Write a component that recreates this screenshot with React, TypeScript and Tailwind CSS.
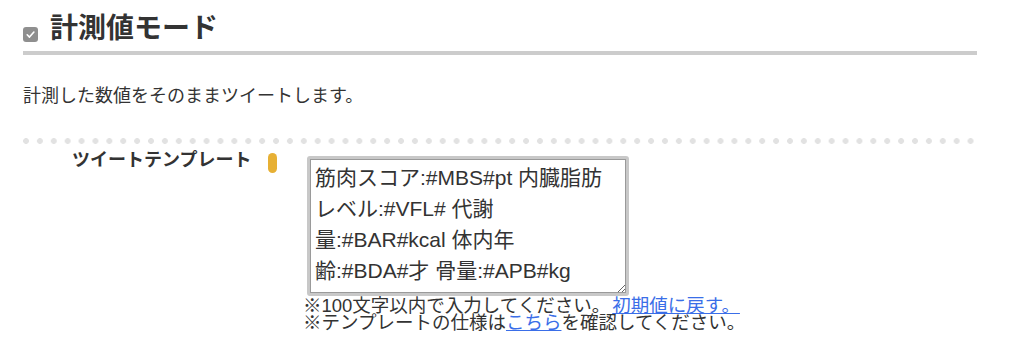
import React, { useEffect, useRef } from "react";

const TEMPLATE = [
  "体重:#WGT#kg 筋肉:#MSW#kg",
  "筋肉スコア:#MBS#pt 内臓脂肪",
  "レベル:#VFL# 代謝",
  "量:#BAR#kcal 体内年",
  "齢:#BDA#才 骨量:#APB#kg",
].join("\n");

function CheckBox() {
  return (
    <div className="mb-[1px] flex h-[15px] w-[15px] items-center justify-center rounded-[3px] bg-[#8f8f8f]">
      <svg width="11" height="11" viewBox="0 0 11 11" fill="none">
        <path d="M2.2 5.8 L4.5 8.1 L8.9 3" stroke="#fff" strokeWidth="1.6" strokeLinecap="round" strokeLinejoin="round" />
      </svg>
    </div>
  );
}

function TemplateBox() {
  const ref = useRef<HTMLTextAreaElement>(null);

  // 参照画像はスクロール済みの状態
  useEffect(() => {
    if (ref.current) ref.current.scrollTop = 32;
  }, []);

  return (
    <textarea
      ref={ref}
      defaultValue={TEMPLATE}
      wrap="off"
      className="ml-[4px] block h-[140px] w-[322px] overflow-hidden whitespace-pre rounded-[3px] border-[3px] border-[#c8c8c8] pl-[5px] pr-[5px] pt-[4px] pb-[8px] text-[21px] leading-[31px] text-[#333] outline-none [box-shadow:inset_0_0_0_1px_#9a9a9a]"
    />
  );
}

export default function App() {
  return (
    <div className="w-[1024px] bg-white pl-[23px] font-['Liberation_Sans','Noto_Sans_CJK_JP',sans-serif] text-[#333]">
      <div className="w-[954px]">
        {/* 見出し */}
        <div className="mt-[15px] flex items-end gap-[12px]">
          <CheckBox />
          <h2 className="text-[28px] font-bold leading-[28px] text-[#333]">計測値モード</h2>
        </div>
        <div className="mt-[8px] h-[4px] bg-[#cccccc]" />

        <p className="mt-[32px] text-[18px] leading-[18px]">計測した数値をそのままツイートします。</p>

        {/* 点線 */}
        <div className="mt-[33px] h-[6px] bg-[radial-gradient(circle_at_3px_3px,#e2e2e2_2.6px,transparent_3.2px)] bg-[length:13.9px_6px] bg-repeat-x" />

        <div className="flex">
          <div className="ml-[49px] mt-[7px] w-[181px] text-[18px] font-bold leading-[18px]">ツイートテンプレート</div>
          <div className="ml-[15px] mt-[9px] h-[20px] w-[9px] rounded-full bg-[#e7b034]" />
          <div className="ml-[26px] mt-[12px]">
            <TemplateBox />
            <div className="mt-[1px] text-[18.5px] leading-[17px]">
              <div>
                ※100文字以内で入力してください。
                <a href="#" className="ml-[2px] text-[#3a6ee8] underline">初期値に戻す。</a>
              </div>
              <div>
                ※テンプレートの仕様は
                <a href="#" className="text-[#3a6ee8] underline">こちら</a>
                を確認してください。
              </div>
            </div>
          </div>
        </div>
        <div className="h-[34px]" />
      </div>
    </div>
  );
}
